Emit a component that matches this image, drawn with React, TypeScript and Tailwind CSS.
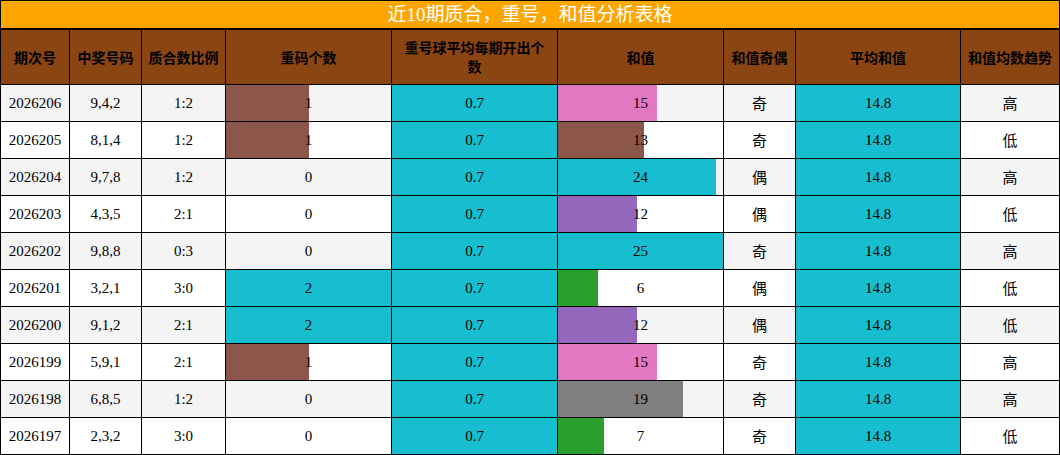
import React from "react";

type Row = {
  id: string;
  nums: string;
  ratio: string;
  rep: number;
  sum: number;
  parity: string;
  trend: string;
};

const rows: Row[] = [
  { id: "2026206", nums: "9,4,2", ratio: "1:2", rep: 1, sum: 15, parity: "奇", trend: "高" },
  { id: "2026205", nums: "8,1,4", ratio: "1:2", rep: 1, sum: 13, parity: "奇", trend: "低" },
  { id: "2026204", nums: "9,7,8", ratio: "1:2", rep: 0, sum: 24, parity: "偶", trend: "高" },
  { id: "2026203", nums: "4,3,5", ratio: "2:1", rep: 0, sum: 12, parity: "偶", trend: "低" },
  { id: "2026202", nums: "9,8,8", ratio: "0:3", rep: 0, sum: 25, parity: "奇", trend: "高" },
  { id: "2026201", nums: "3,2,1", ratio: "3:0", rep: 2, sum: 6, parity: "偶", trend: "低" },
  { id: "2026200", nums: "9,1,2", ratio: "2:1", rep: 2, sum: 12, parity: "偶", trend: "低" },
  { id: "2026199", nums: "5,9,1", ratio: "2:1", rep: 1, sum: 15, parity: "奇", trend: "高" },
  { id: "2026198", nums: "6,8,5", ratio: "1:2", rep: 0, sum: 19, parity: "奇", trend: "高" },
  { id: "2026197", nums: "2,3,2", ratio: "3:0", rep: 0, sum: 7, parity: "奇", trend: "低" },
];

const repColor: Record<number, string> = { 1: "#8c564b", 2: "#17becf" };
const sumColor: Record<number, string> = {
  15: "#e377c2",
  13: "#8c564b",
  24: "#17becf",
  12: "#9467bd",
  25: "#17becf",
  6: "#2ca02c",
  19: "#7f7f7f",
  7: "#2ca02c",
};

const cols = "grid-cols-[68px_71px_83px_165px_165px_165px_71px_164px_98px]";

function barStyle(color: string | undefined, pct: number, base: string): React.CSSProperties {
  if (!color || pct <= 0) return { background: base };
  if (pct >= 100) return { background: color };
  return {
    background: `linear-gradient(90deg, ${color} ${pct}%, ${base} ${pct}%)`,
  };
}

export default function App() {
  const font = { fontFamily: '"Liberation Serif", "Noto Sans CJK SC", serif' };
  return (
    <div className="w-[1060px] h-[455px] bg-white" style={font}>
      <div className="bg-black p-px flex flex-col gap-[2px]">
        <div className="h-[27px] bg-[#ffa500] text-white text-[19px] leading-[27px] text-center">
          近10期质合，重号，和值分析表格
        </div>
        <div className={`grid ${cols} gap-px`}>
          {[
            "期次号",
            "中奖号码",
            "质合数比例",
            "重码个数",
            "重号球平均每期开出个数",
            "和值",
            "和值奇偶",
            "平均和值",
            "和值均数趋势",
          ].map((h, i) => (
            <div
              key={i}
              className="h-[54px] bg-[#8b4513] text-black font-bold text-[14px] leading-[19px] flex items-center justify-center text-center px-[6px]"
              style={{ fontFamily: '"Noto Sans CJK SC", sans-serif' }}
            >
              {h}
            </div>
          ))}
        </div>
      </div>
      <div className={`grid ${cols} gap-px bg-black px-px pb-px`}>
        {rows.map((r, idx) => {
          const base = idx % 2 === 0 ? "#f4f4f4" : "#ffffff";
          const bg = idx % 2 === 0 ? "bg-[#f4f4f4]" : "bg-white";
          const cell = `h-[36px] flex items-center justify-center text-[15px] text-black`;
          return (
            <React.Fragment key={r.id}>
              <div className={`${cell} ${bg}`}>{r.id}</div>
              <div className={`${cell} ${bg}`}>{r.nums}</div>
              <div className={`${cell} ${bg}`}>{r.ratio}</div>
              <div className={cell} style={barStyle(repColor[r.rep], (r.rep / 2) * 100, base)}>
                {r.rep}
              </div>
              <div className={`${cell} bg-[#17becf]`}>0.7</div>
              <div className={cell} style={barStyle(sumColor[r.sum], (r.sum / 25) * 100, base)}>
                {r.sum}
              </div>
              <div className={`${cell} ${bg}`} style={{ fontFamily: '"Noto Sans CJK SC", sans-serif' }}>
                {r.parity}
              </div>
              <div className={`${cell} bg-[#17becf]`}>14.8</div>
              <div className={`${cell} ${bg}`} style={{ fontFamily: '"Noto Sans CJK SC", sans-serif' }}>
                {r.trend}
              </div>
            </React.Fragment>
          );
        })}
      </div>
    </div>
  );
}
